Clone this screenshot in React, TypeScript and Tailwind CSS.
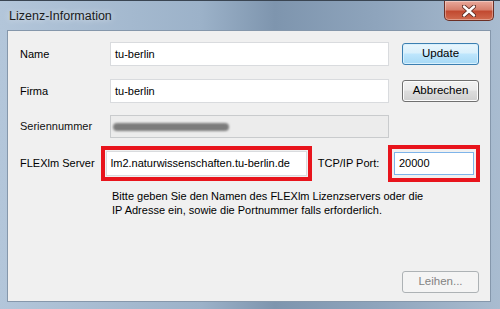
import React from "react";

const font = { fontFamily: '"Liberation Sans", Arial, sans-serif' };

const TextBox: React.FC<{ value?: string; className?: string }> = ({ value, className = "" }) => (
    <div
        className={`flex items-center whitespace-nowrap border bg-white pl-[4px] text-[11px] text-black ${className}`}
    >
        {value}
    </div>
);

const Button: React.FC<{ label: string; variant?: "default" | "normal" | "disabled" }> = ({
    label,
    variant = "normal",
}) => {
    const styles =
        variant === "default"
            ? "border-[#3c7fb1] bg-[linear-gradient(180deg,#eaf6fd_0%,#d9f0fc_45%,#bee6fd_50%,#a7d9f5_100%)] text-black shadow-[inset_0_0_0_1px_#d8f0fd]"
            : variant === "disabled"
            ? "border-[#adb2b5] bg-[#f4f4f4] text-[#838383]"
            : "border-[#707070] bg-[linear-gradient(180deg,#f2f2f2_0%,#ebebeb_45%,#dddddd_50%,#cfcfcf_100%)] text-black shadow-[inset_0_0_0_1px_#fcfcfc]";
    return (
        <div
            className={`flex h-[22px] w-[77px] items-center justify-center rounded-[3px] border text-[11.5px] ${styles}`}
        >
            {label}
        </div>
    );
};

const CloseButton = () => (
    <div className="flex h-[20px] w-[50px] items-center justify-center rounded-b-[5px] border border-t-0 border-[#6b2f25] bg-[linear-gradient(180deg,#e9a99b_0%,#d7806d_45%,#c24a31_55%,#d06a4e_100%)] shadow-[inset_0_0_0_1px_rgba(255,255,255,0.35)]">
        <svg width="14" height="12" viewBox="0 0 14 12">
            <path
                d="M2 1.5 L12 10.5 M12 1.5 L2 10.5"
                stroke="#5a2a22"
                strokeWidth="4.2"
                strokeLinecap="round"
            />
            <path
                d="M2 1.5 L12 10.5 M12 1.5 L2 10.5"
                stroke="#ffffff"
                strokeWidth="2.4"
                strokeLinecap="round"
            />
        </svg>
    </div>
);

const App: React.FC = () => {
    return (
        <div
            className="flex h-[309px] w-[500px] flex-col overflow-hidden bg-[linear-gradient(90deg,#b3c6da_0%,#9cb2c9_40%,#7e95ae_55%,#8ea4bc_75%,#a9bcd0_100%)]"
            style={font}
        >
            {/* 타이틀 바 */}
            <div className="flex h-[30px] shrink-0 items-start justify-between border-t border-[#3a4552] pl-[9px] pr-[6px]">
                <span className="pt-[6px] text-[12.5px] text-[#1b1b1b] [text-shadow:0_0_6px_rgba(255,255,255,0.8)]">
                    Lizenz-Information
                </span>
                <CloseButton />
            </div>

            {/* 본문 */}
            <div className="mb-[7px] ml-[7px] mr-[9px] flex flex-1 flex-col border border-[#8597ab] bg-[#f0f0f0] pb-[8px] pl-[12px] pr-[10px] pt-[11px] text-[11px] text-black">
                <div className="flex h-[24px] items-center">
                    <span className="w-[90px]">Name</span>
                    <TextBox value="tu-berlin" className="h-[24px] w-[279px] border-[#d9dbde]" />
                    <div className="ml-[13px]">
                        <Button label="Update" variant="default" />
                    </div>
                </div>

                <div className="mt-[13px] flex h-[24px] items-center">
                    <span className="w-[90px]">Firma</span>
                    <TextBox value="tu-berlin" className="h-[24px] w-[279px] border-[#d9dbde]" />
                    <div className="ml-[13px]">
                        <Button label="Abbrechen" />
                    </div>
                </div>

                <div className="mt-[12px] flex h-[23px] items-center">
                    <span className="w-[90px] text-[#111]">Seriennummer</span>
                    <div className="flex h-[23px] w-[279px] items-center border border-[#c9cbcd] bg-[#ececec]">
                        {/* 가려진 일련번호 */}
                        <div className="ml-[2px] h-[8px] w-[116px] rounded-[4px] bg-[#7c7c7c] blur-[1px]" />
                    </div>
                </div>

                <div className="mt-[7px] flex h-[37px] items-center">
                    <span className="w-[84px]">FLEXlm Server</span>
                    <div className="border-[4px] border-[#e8141c] p-[1px]">
                        <TextBox
                            value="lm2.naturwissenschaften.tu-berlin.de"
                            className="h-[25px] w-[201px] border-[#d9dbde]"
                        />
                    </div>
                    <span className="ml-[6px] w-[73px]">TCP/IP Port:</span>
                    <div className="border-[4px] border-[#e8141c] px-[2px] py-[3px]">
                        <TextBox value="20000" className="h-[23px] w-[80px] border-[#7eb4ea]" />
                    </div>
                </div>

                <div className="ml-[92px] mt-[7px] leading-[14px]">
                    <div>Bitte geben Sie den Namen des FLEXlm Lizenzservers oder die</div>
                    <div>IP Adresse ein, sowie die Portnummer falls erforderlich.</div>
                </div>

                <div className="flex-1" />

                <div className="flex justify-end pr-[1px]">
                    <Button label="Leihen..." variant="disabled" />
                </div>
            </div>
        </div>
    );
};

export default App;
